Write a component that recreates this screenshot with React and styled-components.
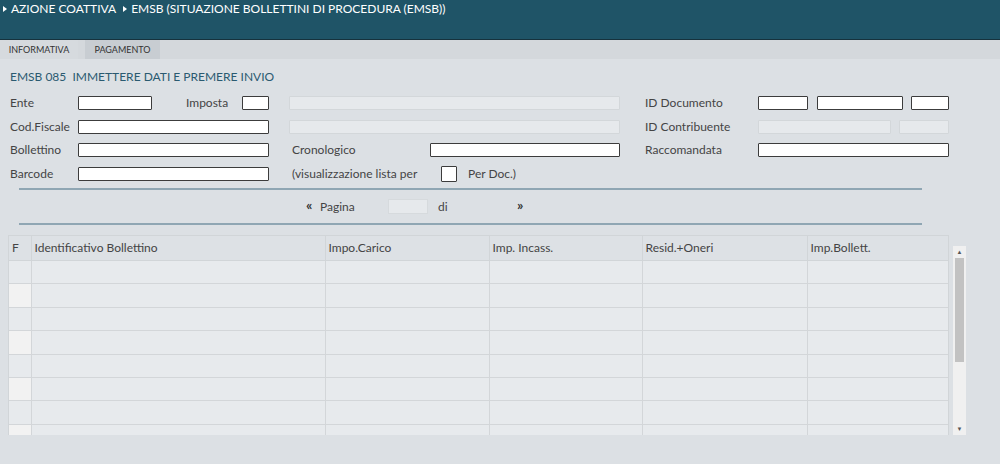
import React from "react";
import styled, { createGlobalStyle } from "styled-components";

const GlobalStyle = createGlobalStyle`
    html, body {
        margin: 0;
        padding: 0;
        background: #dce0e4;
        font-family: Lato, "Open Sans", sans-serif;
        color: #444;
    }
    * {
        box-sizing: border-box;
    }
`;

const columns = [
    { label: "F", width: 22 },
    { label: "Identificativo Bollettino", width: 294 },
    { label: "Impo.Carico", width: 164 },
    { label: "Imp. Incass.", width: 153 },
    { label: "Resid.+Oneri", width: 165 },
    { label: "Imp.Bollett.", width: 142 },
];

const rows = [1, 2, 3, 4, 5, 6, 7, 8];

const App = () => {
    return (
        <Page>
            <GlobalStyle />
            <Header>
                <Crumb>AZIONE COATTIVA</Crumb>
                <Crumb>EMSB (SITUAZIONE BOLLETTINI DI PROCEDURA (EMSB))</Crumb>
            </Header>
            <Tabs>
                <Tab active>INFORMATIVA</Tab>
                <Tab>PAGAMENTO</Tab>
            </Tabs>
            <Title>EMSB 085&nbsp;&nbsp;IMMETTERE DATI E PREMERE INVIO</Title>

            <Form>
                <Label col="1">Ente</Label>
                <Field col="2" />
                <Label col="4">Imposta</Label>
                <Field col="5" />
                <Field col="7 / 9" disabled />
                <Label col="10">ID Documento</Label>
                <FieldGroup col="11">
                    <Field w="50" />
                    <Field w="86" />
                    <Field w="38" />
                </FieldGroup>

                <Label col="1">Cod.Fiscale</Label>
                <Field col="2 / 6" />
                <Field col="7 / 9" disabled />
                <Label col="10">ID Contribuente</Label>
                <FieldGroup col="11">
                    <Field w="133" disabled />
                    <Field w="50" disabled />
                </FieldGroup>

                <Label col="1">Bollettino</Label>
                <Field col="2 / 6" />
                <Label col="7" indent>Cronologico</Label>
                <Field col="8" />
                <Label col="10">Raccomandata</Label>
                <Field col="11" />

                <Label col="1">Barcode</Label>
                <Field col="2 / 6" />
                <Label col="7" indent>(visualizzazione lista per</Label>
                <CheckLine col="8 / 10">
                    <Check />
                    <span>Per Doc.)</span>
                </CheckLine>
            </Form>

            <Pager>
                <Arrow w="14">«</Arrow>
                <PagerText w="68">Pagina</PagerText>
                <PageInput />
                <PagerText w="79">di</PagerText>
                <Arrow>»</Arrow>
            </Pager>

            <GridArea>
                <TableBox>
                    <Table>
                        <thead>
                            <tr>
                                {columns.map((c) => (
                                    <Th key={c.label} style={{ width: c.width }}>
                                        {c.label}
                                    </Th>
                                ))}
                            </tr>
                        </thead>
                        <tbody>
                            {rows.map((r) => (
                                <tr key={r}>
                                    {columns.map((c, i) => (
                                        <Td key={c.label} flag={i === 0} even={r % 2 === 0} />
                                    ))}
                                </tr>
                            ))}
                        </tbody>
                    </Table>
                </TableBox>
                <ScrollBar>
                    <ScrollArrow>▲</ScrollArrow>
                    <Thumb />
                    <ScrollSpacer />
                    <ScrollArrow>▼</ScrollArrow>
                </ScrollBar>
            </GridArea>
        </Page>
    );
};

const Page = styled.div`
    width: 1000px;
    height: 464px;
    overflow: hidden;
    background: #dce0e4;
`;

const Header = styled.div`
    height: 40px;
    background: #1f5467;
    border-bottom: 1px solid #16323d;
    display: flex;
    align-items: flex-start;
    padding: 1px 0 0 3px;
    gap: 7px;
`;

const Crumb = styled.span`
    color: #ffffff;
    font-size: 12px;
    line-height: 15px;

    &::before {
        content: "";
        display: inline-block;
        border-left: 4px solid #ffffff;
        border-top: 3px solid transparent;
        border-bottom: 3px solid transparent;
        margin: 0 4px 1px 0;
    }
`;

const Tabs = styled.div`
    height: 19px;
    background: #d4d8dc;
    display: flex;
    gap: 7px;
`;

const Tab = styled.div`
    font-size: 9px;
    line-height: 19px;
    width: ${(p) => (p.active ? "78px" : "75px")};
    text-align: center;
    color: #333;
    background: ${(p) => (p.active ? "#d6dade" : "#c8cdd2")};
`;

const Title = styled.div`
    color: #2a5a70;
    font-size: 12px;
    line-height: 14px;
    padding: 11px 0 0 10px;
    height: 36px;
`;

const Form = styled.div`
    display: grid;
    grid-template-columns: 68px 74px 34px 56px 27px 20px 141px 190px 25px 113px 191px;
    grid-auto-rows: 14px;
    row-gap: 9.5px;
    padding: 1px 0 0 10px;
    align-items: center;
`;

const Label = styled.div`
    grid-column: ${(p) => p.col};
    font-size: 12px;
    line-height: 14px;
    color: #444;
    white-space: nowrap;
    padding-left: ${(p) => (p.indent ? "3px" : "0")};
`;

const Field = styled.div`
    grid-column: ${(p) => p.col || "auto"};
    width: ${(p) => (p.w ? `${p.w}px` : "auto")};
    height: 14px;
    background: ${(p) => (p.disabled ? "#e6e9ec" : "#ffffff")};
    border: 1px solid ${(p) => (p.disabled ? "#d3d7da" : "#3c3c3c")};
    border-radius: 1px;
`;

const FieldGroup = styled.div`
    grid-column: ${(p) => p.col};
    display: flex;
    justify-content: space-between;
`;

const CheckLine = styled.div`
    grid-column: ${(p) => p.col};
    display: flex;
    align-items: center;
    font-size: 12px;
    color: #444;
    white-space: nowrap;
`;

const Check = styled.div`
    width: 16px;
    height: 16px;
    background: #fff;
    border: 1px solid #3c3c3c;
    border-radius: 1px;
    margin: 0 11px 0 11px;
`;

const Pager = styled.div`
    margin: 7px 78px 0 19px;
    border-top: 2px solid #8fa6b3;
    border-bottom: 2px solid #8fa6b3;
    height: 37px;
    display: flex;
    align-items: center;
    padding-left: 287px;
`;

const Arrow = styled.span`
    width: ${(p) => (p.w ? `${p.w}px` : "auto")};
    font-size: 14px;
    font-weight: 700;
    color: #333;
    line-height: 14px;
    margin-top: -2px;
`;

const PagerText = styled.span`
    width: ${(p) => p.w}px;
    font-size: 12px;
    color: #444;
`;

const PageInput = styled.div`
    width: 40px;
    height: 15px;
    background: #e6e9ec;
    border: 1px solid #d6dadd;
    margin-right: 10px;
`;

const GridArea = styled.div`
    display: flex;
    align-items: flex-start;
    margin: 10px 0 0 8px;
    gap: 4px;
`;

const TableBox = styled.div`
    width: 941px;
    height: 200px;
    overflow: hidden;
    border: 1px solid #d1d5d8;
    border-bottom: none;
`;

const Table = styled.table`
    border-collapse: collapse;
    table-layout: fixed;
    width: 940px;
`;

const Th = styled.th`
    height: 25px;
    background: #dde1e5;
    border: 1px solid #d1d5d8;
    border-top: none;
    text-align: left;
    font-weight: 400;
    font-size: 12px;
    color: #444;
    padding: 0 0 0 3px;

    &:first-child {
        border-left: none;
    }
`;

const Td = styled.td`
    height: 23.4px;
    padding: 0;
    border: 1px solid #d3d6d9;
    background: ${(p) => (p.flag && p.even ? "#f2f2f2" : "#e7eaed")};

    &:first-child {
        border-left: none;
    }
`;

const ScrollBar = styled.div`
    margin-top: 11px;
    width: 13px;
    height: 189px;
    background: #f0f0f0;
    display: flex;
    flex-direction: column;
    align-items: center;
`;

const ScrollArrow = styled.div`
    font-size: 6px;
    line-height: 12px;
    height: 12px;
    color: #555;
`;

const Thumb = styled.div`
    width: 9px;
    height: 104px;
    background: #c2c2c2;
`;

const ScrollSpacer = styled.div`
    flex: 1;
`;

export default App;
